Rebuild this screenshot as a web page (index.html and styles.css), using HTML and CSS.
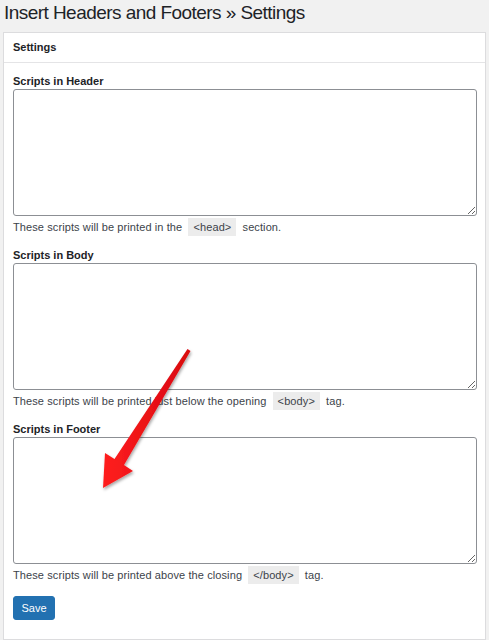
FILE: index.html
```html
<!DOCTYPE html>
<html>
<head>
<meta charset="utf-8">
<link rel="stylesheet" href="styles.css">
</head>
<body>
<div class="wrap">
  <h1 class="title">Insert Headers and Footers » Settings</h1>
  <div class="card">
    <div class="card-head">Settings</div>
    <div class="card-body">
      <div class="field">
        <label class="label">Scripts in Header</label>
        <textarea class="box"></textarea>
        <p class="desc">These scripts will be printed in the <code>&lt;head&gt;</code> section.</p>
      </div>
      <div class="field">
        <label class="label">Scripts in Body</label>
        <textarea class="box"></textarea>
        <p class="desc">These scripts will be printed just below the opening <code>&lt;body&gt;</code> tag.</p>
      </div>
      <div class="field">
        <label class="label">Scripts in Footer</label>
        <textarea class="box"></textarea>
        <p class="desc">These scripts will be printed above the closing <code>&lt;/body&gt;</code> tag.</p>
      </div>
      <button class="save">Save</button>
    </div>
  </div>
  <svg class="arrow" width="489" height="640" viewBox="0 0 489 640">
    <defs>
      <filter id="sh" x="-20%" y="-20%" width="140%" height="140%">
        <feDropShadow dx="1" dy="2" stdDeviation="1.5" flood-color="#000" flood-opacity="0.35"/>
      </filter>
      <linearGradient id="rg" x1="0" y1="0" x2="1" y2="0">
        <stop offset="0" stop-color="#ff1f1f"/>
        <stop offset="1" stop-color="#d8070f"/>
      </linearGradient>
    </defs>
    <polygon filter="url(#sh)" fill="url(#rg)" points="187.5,349 190.5,351 124,465 133,471 103,488 105,453 114.5,459"/>
  </svg>
</div>
</body>
</html>
```
FILE: styles.css
```css
html, body {
  margin: 0;
  padding: 0;
  background: #f1f1f1;
}
body {
  font-family: "Liberation Sans", Arial, sans-serif;
  color: #1d2327;
}
.wrap {
  position: relative;
  width: 489px;
  height: 640px;
  overflow: hidden;
}
.title {
  margin: 0;
  padding: 0 0 0 4px;
  height: 32px;
  line-height: 25px;
  font-size: 19px;
  letter-spacing: -0.55px;
  font-weight: 400;
  color: #1d2327;
}
.card {
  margin-left: 3px;
  background: #fff;
  border: 1px solid #dcdcde;
  box-sizing: border-box;
  width: 483px;
}
.card-head {
  height: 29px;
  line-height: 29px;
  padding-left: 9px;
  font-size: 11px;
  font-weight: 700;
  border-bottom: 1px solid #e4e4e6;
}
.card-body {
  padding: 11px 9px 19px 9px;
}
.field {
  display: flex;
  flex-direction: column;
  margin-bottom: 12px;
}
.label {
  font-size: 11px;
  font-weight: 700;
  line-height: 14px;
  margin-bottom: 1px;
  color: #1d2327;
}
.box {
  display: block;
  width: 464px;
  height: 127px;
  box-sizing: border-box;
  border: 1px solid #8c8f94;
  border-radius: 3px;
  background: #fff;
  margin: 0;
  resize: vertical;
}
.desc {
  margin: 2px 0 0 0;
  height: 18px;
  line-height: 18px;
  font-size: 11px;
  letter-spacing: 0.1px;
  color: #3c434a;
}
code {
  font-family: "Liberation Sans", Arial, sans-serif;
  font-size: 11px;
  background: #ececec;
  padding: 3px 5px;
  margin: 0 3px;
  color: #3c434a;
}
.save {
  display: block;
  width: 42px;
  height: 24px;
  margin-top: 4px;
  background: #2271b1;
  color: #fff;
  border: 1px solid #2271b1;
  border-radius: 3px;
  font-family: "Liberation Sans", Arial, sans-serif;
  font-size: 11px;
  font-weight: 400;
  padding: 0;
}
.arrow {
  position: absolute;
  left: 0;
  top: 0;
  pointer-events: none;
}
```
